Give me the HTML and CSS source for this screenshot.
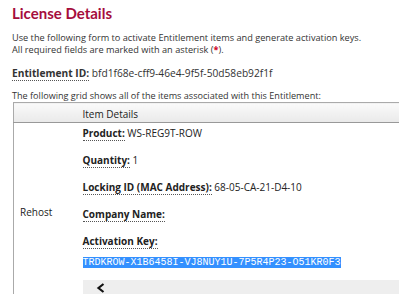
FILE: index.html
```html
<!DOCTYPE html>
<html lang="en">

<head>
    <meta charset="UTF-8">
    <title>License Details</title>
    <link rel="stylesheet" href="styles.css">
</head>

<body>
    <div class="page">
        <h1 class="title">License Details</h1>

        <p class="intro">
            Use the following form to activate Entitlement items and generate activation keys.<br>
            All required fields are marked with an asterisk (<span class="req">*</span>).
        </p>

        <p class="ent-id"><abbr class="lbl">Entitlement ID:</abbr> bfd1f68e-cff9-46e4-9f5f-50d58eb92f1f</p>

        <p class="grid-note">The following grid shows all of the items associated with this Entitlement:</p>

        <div class="grid-wrap">
            <table class="grid">
                <thead>
                    <tr>
                        <th class="col-action"></th>
                        <th class="col-details">Item Details</th>
                    </tr>
                </thead>
                <tbody>
                    <tr>
                        <td class="col-action">Rehost</td>
                        <td class="col-details">
                            <div class="field"><abbr class="lbl">Product:</abbr> WS-REG9T-ROW</div>
                            <div class="field"><abbr class="lbl">Quantity:</abbr> 1</div>
                            <div class="field"><abbr class="lbl">Locking ID (MAC Address):</abbr> 68-05-CA-21-D4-10</div>
                            <div class="field"><abbr class="lbl">Company Name:</abbr></div>
                            <div class="field"><abbr class="lbl">Activation Key:</abbr></div>
                            <div class="key"><span class="key-sel">TRDKROW-X1B6458I-VJ8NUY1U-7P5R4P23-O51KR0F3</span></div>
                            <div class="hscroll">
                                <svg class="arrow" width="10" height="10" viewBox="0 0 10 10">
                                    <polyline points="7.5,1 2.5,5 7.5,9" fill="none" stroke="#111" stroke-width="2.2" />
                                </svg>
                            </div>
                        </td>
                    </tr>
                </tbody>
            </table>
        </div>
    </div>
</body>

</html>
```

FILE: styles.css
```css
* {
    margin: 0;
    padding: 0;
    box-sizing: border-box;
}

body {
    font-family: 'Open Sans', 'Noto Sans', sans-serif;
    font-size: 9px;
    color: #333;
    background: white;
    overflow: hidden;
}

.page {
    padding: 0 0 0 12px;
}

.title {
    margin-top: 3px;
    color: #a50d3d;
    font-family: Lato, 'Open Sans', sans-serif;
    font-size: 15px;
    font-weight: 700;
    line-height: 20px;
}

.intro {
    margin-top: 9px;
    font-size: 9.2px;
    line-height: 12px;
}

.req {
    color: #d0021b;
    font-weight: 700;
}

.ent-id {
    margin-top: 11px;
    font-size: 10.2px;
    line-height: 12px;
}

.lbl {
    font-weight: 700;
    text-decoration: none;
    border-bottom: 1px dotted #555;
}

.grid-note {
    margin-top: 11px;
    font-size: 9.1px;
    line-height: 12px;
}

.grid-wrap {
    width: 420px;
    margin-left: 1px;
}

.grid {
    border-collapse: collapse;
    width: 100%;
    border: 1px solid #aaa;
    font-size: 10px;
    color: #222;
}

.grid th {
    height: 20px;
    font-weight: 400;
    text-align: left;
    background: linear-gradient(#fafafa, #e9e9e9);
    border-bottom: 1px solid #999;
}

.col-action {
    width: 69px;
    padding-left: 6px;
    vertical-align: middle;
}

.col-details {
    padding-top: 3px;
}

.field {
    line-height: 14px;
    margin: 0 0 13px;
}

.key {
    font-family: 'Liberation Mono', 'Courier New', monospace;
    font-size: 10px;
    line-height: 11px;
    margin-top: -4px;
}

.key-sel {
    background: #3390ff;
    color: white;
}

.hscroll {
    display: flex;
    align-items: center;
    margin-top: 12px;
    height: 20px;
    padding: 0 0 4px 13px;
    background: #eeeeee;
}
```
